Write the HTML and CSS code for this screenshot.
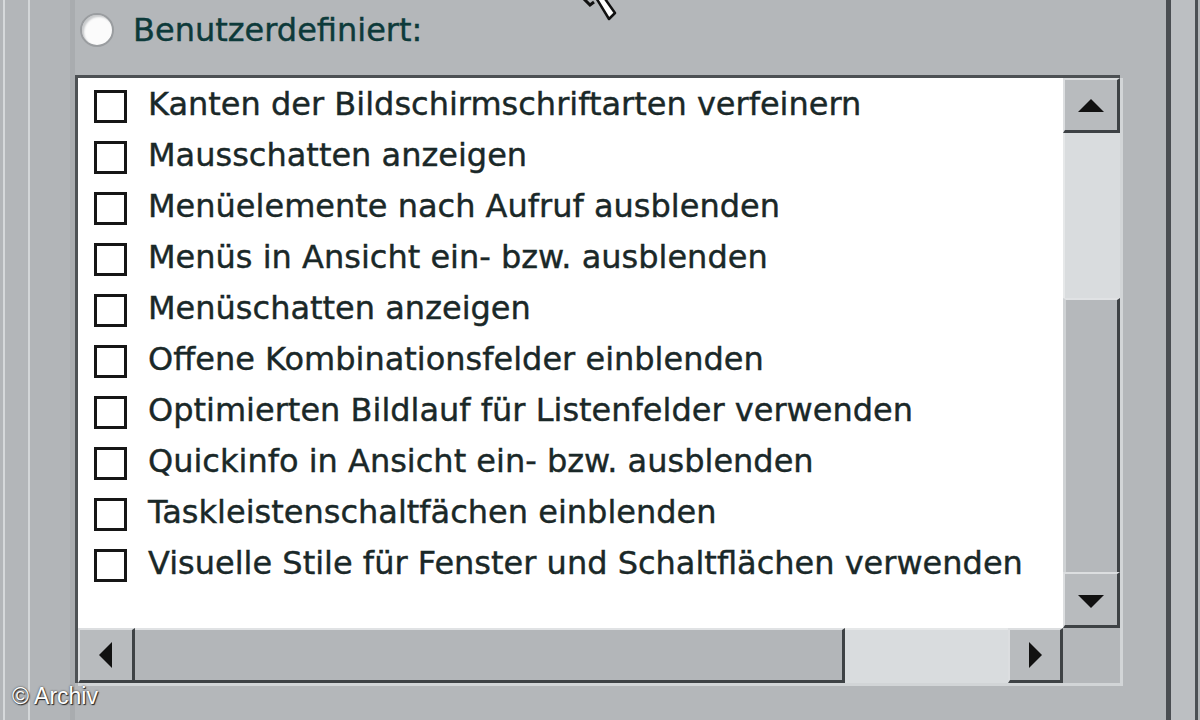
FILE: index.html
```html
<!DOCTYPE html>
<html lang="de">
<head>
<meta charset="utf-8">
<title>Benutzerdefiniert</title>
<link rel="stylesheet" href="styles.css">
</head>
<body>
<div class="screen">
  <div class="edge-left"></div>
  <div class="main">
    <div class="radio-row">
      <span class="radio"></span>
      <span class="radio-label">Benutzerdefiniert:</span>
    </div>
    <div class="listbox">
      <div class="list">
        <div class="row"><span class="check"></span><span class="label">Kanten der Bildschirmschriftarten verfeinern</span></div>
        <div class="row"><span class="check"></span><span class="label">Mausschatten anzeigen</span></div>
        <div class="row"><span class="check"></span><span class="label">Menüelemente nach Aufruf ausblenden</span></div>
        <div class="row"><span class="check"></span><span class="label">Menüs in Ansicht ein- bzw. ausblenden</span></div>
        <div class="row"><span class="check"></span><span class="label">Menüschatten anzeigen</span></div>
        <div class="row"><span class="check"></span><span class="label">Offene Kombinationsfelder einblenden</span></div>
        <div class="row"><span class="check"></span><span class="label">Optimierten Bildlauf für Listenfelder verwenden</span></div>
        <div class="row"><span class="check"></span><span class="label">Quickinfo in Ansicht ein- bzw. ausblenden</span></div>
        <div class="row"><span class="check"></span><span class="label">Taskleistenschaltfächen einblenden</span></div>
        <div class="row"><span class="check"></span><span class="label">Visuelle Stile für Fenster und Schaltflächen verwenden</span></div>
      </div>
      <div class="vscroll">
        <div class="btn btn-v">
          <svg width="28" height="14" viewBox="0 0 28 14"><polygon points="14,0 27,13 1,13" fill="#111"/></svg>
        </div>
        <div class="vtrack"></div>
        <div class="vthumb"></div>
        <div class="btn btn-v">
          <svg width="28" height="14" viewBox="0 0 28 14"><polygon points="1,1 27,1 14,14" fill="#111"/></svg>
        </div>
      </div>
      <div class="hscroll">
        <div class="btn btn-h">
          <svg width="14" height="26" viewBox="0 0 14 26"><polygon points="13,0 13,26 0,13" fill="#111"/></svg>
        </div>
        <div class="hthumb"></div>
        <div class="htrack"></div>
        <div class="btn btn-h">
          <svg width="14" height="26" viewBox="0 0 14 26"><polygon points="1,0 14,13 1,26" fill="#111"/></svg>
        </div>
      </div>
      <div class="corner"></div>
    </div>
  </div>
  <div class="edge-right"></div>
  <svg class="cursor" width="40" height="24" viewBox="0 0 40 24">
    <polyline points="3,-2 10,5 14,2" fill="none" stroke="#111" stroke-width="3"/>
    <polygon points="15,-4 23,-4 35,13 29,19" fill="#fff" stroke="#111" stroke-width="2.5" stroke-linejoin="round"/>
  </svg>
  <div class="credit">© Archiv</div>
</div>
</body>
</html>
```
FILE: styles.css
```css
html, body {
  margin: 0;
  padding: 0;
}
body {
  background: #b4b7ba;
  overflow: hidden;
}
.screen {
  position: relative;
  width: 1200px;
  height: 720px;
  display: flex;
  background: #b4b7ba;
  overflow: hidden;
  font-family: "DejaVu Sans", Verdana, sans-serif;
}
.edge-left {
  width: 75px;
  flex: none;
  background: linear-gradient(to right,
    #b3b6b9 0, #b3b6b9 3px, #d6d9db 3px, #d6d9db 5px,
    #b3b6b9 5px, #b3b6b9 28px, #d3d6d8 28px, #d3d6d8 30px,
    #b2b5b8 30px, #b2b5b8 70px, #a9acaf 70px);
}
.main {
  width: 1048px;
  flex: none;
  display: flex;
  flex-direction: column;
}
.radio-row {
  height: 75px;
  display: flex;
  align-items: center;
  padding-left: 5px;
  padding-bottom: 16px;
  box-sizing: border-box;
  gap: 19px;
}
.radio {
  width: 30px;
  height: 30px;
  border-radius: 50%;
  background: #fbfbfb;
  border: 2px solid #9a9da0;
  box-shadow: inset 2px 2px 2px #c8cacc;
}
.radio-label {
  font-size: 32px;
  color: #0d3a3a;
  -webkit-text-stroke: 0.4px #0d3a3a;
}
.listbox {
  width: 1045px;
  height: 608px;
  box-sizing: border-box;
  border-top: 3px solid #4d5154;
  border-left: 3px solid #4d5154;
  box-shadow: 3px 3px 0 #d2d5d7;
  display: grid;
  grid-template-columns: 985px 57px;
  grid-template-rows: 550px 55px;
}
.list {
  background: #fff;
  padding: 12px 0 0 16px;
  display: flex;
  flex-direction: column;
}
.row {
  height: 51px;
  display: flex;
  align-items: flex-start;
  gap: 21px;
}
.check {
  width: 33px;
  height: 33px;
  box-sizing: border-box;
  border: 3px solid #161616;
  flex: none;
}
.label {
  font-size: 32px;
  line-height: 33px;
  color: #1a2828;
  -webkit-text-stroke: 0.4px #1a2828;
  white-space: nowrap;
  margin-top: -2px;
}
.btn {
  box-sizing: border-box;
  background: #b8bbbe;
  border-top: 2px solid #dcdee0;
  border-left: 2px solid #dcdee0;
  border-right: 3px solid #3e4245;
  border-bottom: 3px solid #3e4245;
  display: flex;
  align-items: center;
  justify-content: center;
}
.vscroll {
  display: grid;
  grid-template-rows: 55px 165px 1fr 56px;
}
.btn-v {
  padding-top: 2px;
}
.vtrack {
  background: #d9dcde;
  border-left: 2px solid #e6e8e9;
}
.vthumb {
  background: #b5b8bb;
  border-top: 2px solid #e0e2e4;
  border-left: 3px solid #cfd2d4;
  border-right: 3px solid #3e4245;
}
.hscroll {
  display: grid;
  grid-template-columns: 57px 710px 163px 55px;
}
.hthumb {
  background: #b3b6b9;
  border-top: 2px solid #e0e2e4;
  border-right: 3px solid #3e4245;
  border-bottom: 3px solid #3e4245;
}
.htrack {
  background: #d9dcde;
  border-top: 2px solid #e6e8e9;
}
.corner {
  background: #b4b7ba;
}
.edge-right {
  flex: 1;
  background: linear-gradient(to right,
    #b4b7ba 0, #b4b7ba 43px, #4a4e52 43px, #4a4e52 48px,
    #bcbfc2 48px, #bcbfc2 72px, #4c5054 72px, #4c5054 75px,
    #b4b7ba 75px);
}
.cursor {
  position: absolute;
  left: 580px;
  top: 0;
}
.credit {
  position: absolute;
  left: 12px;
  top: 683px;
  font-family: "Liberation Sans", Arial, sans-serif;
  font-size: 23px;
  color: #fff;
  text-shadow: 0 0 2px #333, 1px 1px 1px #222;
}
```
